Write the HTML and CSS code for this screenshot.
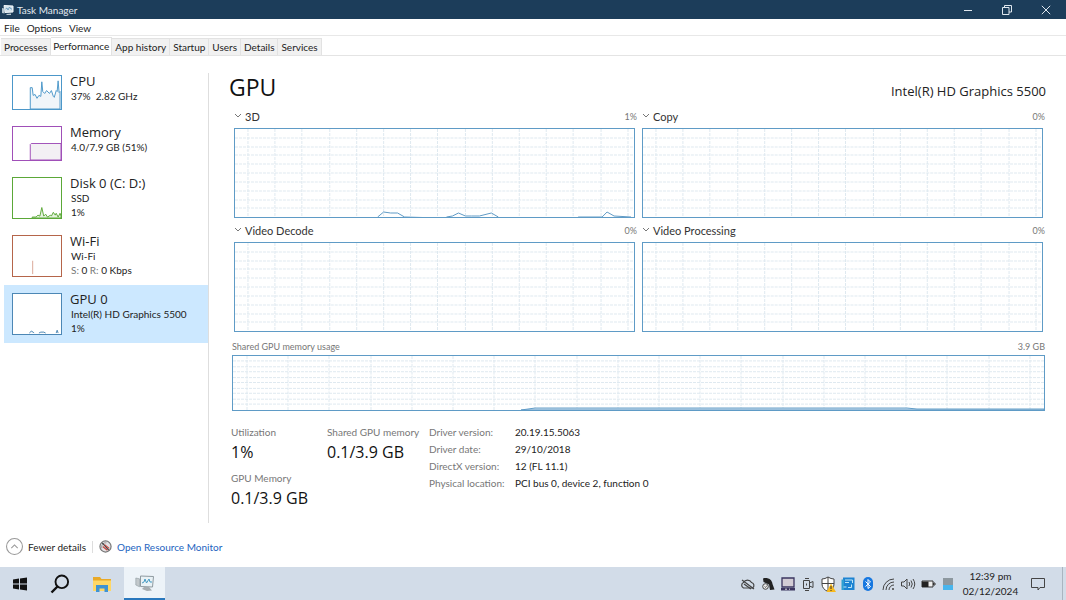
FILE: index.html
```html
<!DOCTYPE html>
<html lang="en">
<head>
<meta charset="utf-8">
<title>Task Manager</title>
<link rel="stylesheet" href="styles.css">
</head>
<body>
<svg class="defs" aria-hidden="true">
  <symbol id="grid" viewBox="0 0 400 88" preserveAspectRatio="none">
    <path d="M13 0V88M40 0V88M67 0V88M95 0V88M122 0V88M149 0V88M176 0V88M203 0V88M231 0V88M258 0V88M285 0V88M312 0V88M339 0V88M367 0V88M394 0V88M0 9H400M0 18H400M0 26H400M0 35H400M0 44H400M0 53H400M0 62H400M0 71H400M0 79H400"/>
  </symbol>
  <symbol id="chev" viewBox="0 0 8 6"><path d="M1 1l3 3 3-3" fill="none" stroke="#777"/></symbol>
</svg>

<header class="titlebar">
  <svg class="app-icon" viewBox="0 0 12 12" aria-hidden="true"><path d="M2 1.500l9 .5v6l-8 .5z" fill="#d5e3ec" stroke="#f2f7fa"/><path d="M3.500 5l1.500-1 1 2 1.500-3L9 5h1" fill="none" stroke="#5b8fb5" stroke-width=".8"/><path d="M0 4l2.500.5v5L0 9zM4 10l5-.5v1.500H5z" fill="#b5c5d0"/></svg>
  <span class="title">Task Manager</span>
  <button class="win-btn" aria-label="Minimize"><svg viewBox="0 0 10 10"><path d="M1 5.500h8"/></svg></button>
  <button class="win-btn" aria-label="Restore"><svg viewBox="0 0 10 10"><path d="M.5 2.500h6.500v7H.5zM2.500 2.500V.5h7V7H7"/></svg></button>
  <button class="win-btn" aria-label="Close"><svg viewBox="0 0 10 10"><path d="M.8.8l8.400 8.400M9.200.8L.8 9.200"/></svg></button>
</header>

<nav class="menubar" aria-label="Menu">
  <button>File</button><button>Options</button><button>View</button>
</nav>

<div class="tabs" role="tablist">
  <button role="tab">Processes</button><button role="tab" class="active" aria-selected="true">Performance</button><button role="tab">App history</button><button role="tab">Startup</button><button role="tab">Users</button><button role="tab">Details</button><button role="tab">Services</button>
</div>

<div class="content">
  <nav class="sidebar" aria-label="Resources">
    <button class="item">
      <svg class="thumb cpu" viewBox="0 0 50 34" preserveAspectRatio="none"><path d="M18 34V12l2 0 1 8 2-1 2 4 2-3 2 1 1-15 1 10 2 2 2-3 3 3 2-3 2 6 1 1 2-7 1 1 1-11 1 12 1-1V34z"/></svg>
      <span class="info"><span class="name">CPU</span><span class="sub">37%&nbsp; 2.82 GHz</span></span>
    </button>
    <button class="item">
      <svg class="thumb mem" viewBox="0 0 50 34" preserveAspectRatio="none"><path d="M18 34V18l1-1H50V34z"/></svg>
      <span class="info"><span class="name">Memory</span><span class="sub">4.0/7.9 GB (51%)</span></span>
    </button>
    <button class="item tall">
      <svg class="thumb disk" viewBox="0 0 50 42" preserveAspectRatio="none"><path d="M20 41l4 0 2-2 2 1 2-9 2 9 2-2 2 3 3-2 1 1 2-4 2 3 1-2 2 4 2-4 1 3V42H20z"/></svg>
      <span class="info"><span class="name">Disk 0 (C: D:)</span><span class="sub">SSD</span><span class="sub">1%</span></span>
    </button>
    <button class="item tall">
      <svg class="thumb wifi" viewBox="0 0 50 42" preserveAspectRatio="none"><path d="M20.500 40V26"/></svg>
      <span class="info"><span class="name">Wi-Fi</span><span class="sub">Wi-Fi</span><span class="sub"><i>S:</i> 0 <i>R:</i> 0 Kbps</span></span>
    </button>
    <button class="item tall selected" aria-current="true">
      <svg class="thumb gpu" viewBox="0 0 50 42" preserveAspectRatio="none"><path d="M17 41l2-2 2 1 1 1M27 41l2-1h3l2 1M45 41l1-3 1 3"/></svg>
      <span class="info"><span class="name">GPU 0</span><span class="sub">Intel(R) HD Graphics 5500</span><span class="sub">1%</span></span>
    </button>
  </nav>

  <main class="panel">
    <div class="heading"><h1>GPU</h1><span class="device">Intel(R) HD Graphics 5500</span></div>
    <div class="engines">
      <section><div class="label"><button><svg><use href="#chev"/></svg>3D</button><span>1%</span></div>
        <svg class="chart" viewBox="0 0 400 88" preserveAspectRatio="none"><use class="grid" href="#grid" width="400" height="88"/><path class="line" d="M143 88l6-5 7 1h7l7 4 18 .5M212 88l6-1 6-3 7 3h6l8 0 12-3 7 4M344 88h24l5-5 7 4 17 1"/></svg></section>
      <section><div class="label"><button><svg><use href="#chev"/></svg>Copy</button><span>0%</span></div>
        <svg class="chart" viewBox="0 0 400 88" preserveAspectRatio="none"><use class="grid" href="#grid" width="400" height="88"/></svg></section>
      <section><div class="label"><button><svg><use href="#chev"/></svg>Video Decode</button><span>0%</span></div>
        <svg class="chart" viewBox="0 0 400 88" preserveAspectRatio="none"><use class="grid" href="#grid" width="400" height="88"/></svg></section>
      <section><div class="label"><button><svg><use href="#chev"/></svg>Video Processing</button><span>0%</span></div>
        <svg class="chart" viewBox="0 0 400 88" preserveAspectRatio="none"><use class="grid" href="#grid" width="400" height="88"/></svg></section>
    </div>
    <section class="memory">
      <div class="mem-label"><span>Shared GPU memory usage</span><span>3.9 GB</span></div>
      <svg class="chart mem-chart" viewBox="0 0 811 55" preserveAspectRatio="none"><path class="grid" d="M14 0V55M55 0V55M96 0V55M138 0V55M179 0V55M220 0V55M261 0V55M302 0V55M344 0V55M385 0V55M426 0V55M467 0V55M508 0V55M550 0V55M591 0V55M632 0V55M673 0V55M714 0V55M756 0V55M797 0V55M0 5H811M0 11H811M0 16H811M0 22H811M0 27H811M0 33H811M0 38H811M0 44H811M0 49H811"/><path class="line fill" d="M288 55l14-2H674l10 1H811V55z"/></svg>
    </section>
    <div class="stats">
      <dl class="big"><dt>Utilization</dt><dd>1%</dd><dt>GPU Memory</dt><dd>0.1/3.9 GB</dd></dl>
      <dl class="big"><dt>Shared GPU memory</dt><dd>0.1/3.9 GB</dd></dl>
      <table class="driver">
        <tr><th scope="row">Driver version:</th><td>20.19.15.5063</td></tr>
        <tr><th scope="row">Driver date:</th><td>29/10/2018</td></tr>
        <tr><th scope="row">DirectX version:</th><td>12 (FL 11.1)</td></tr>
        <tr><th scope="row">Physical location:</th><td>PCI bus 0, device 2, function 0</td></tr>
      </table>
    </div>
  </main>
</div>

<footer class="footer">
  <button class="fewer"><svg viewBox="0 0 16 16"><circle cx="8" cy="8" r="7.500"/><path d="M5 9.500l3-3 3 3"/></svg>Fewer details</button>
  <span class="sep"></span>
  <a href="#" class="monitor"><svg viewBox="0 0 14 14"><circle cx="7" cy="7" r="6" fill="#e4e2e4" stroke="#777" stroke-width="1.300"/><path d="M3 9a4.500 4.500 0 0 1 5-6" fill="none" stroke="#9a9a9a"/><path d="M3.500 3l7 8" stroke="#444" stroke-width="1.300"/><path d="M6 5l5 4M4 7l5 4" stroke="#c8443c" stroke-width="1.200"/></svg>Open Resource Monitor</a>
</footer>

<div class="taskbar">
  <button class="task" aria-label="Start"><svg viewBox="0 0 20 20"><path d="M3 5.500l6-.9v5H3zM10 4.500L17 3.500v6.100h-7zM3 10.500h6v5l-6-.9zM10 10.500h7v6.100l-7-1z" fill="#111"/></svg></button>
  <button class="task" aria-label="Search"><svg viewBox="0 0 20 20"><circle cx="11.800" cy="7.800" r="6.300" fill="none" stroke="#111" stroke-width="1.900"/><path d="M7.500 12.500l-6 6" stroke="#111" stroke-width="2.400"/></svg></button>
  <button class="task wide" aria-label="File Explorer"><svg viewBox="0 0 20 20"><path d="M1 3h7l1.500 2H19v12H1z" fill="#e9a927"/><path d="M1 6.500h18V17H1z" fill="#ffd766"/><path d="M4 11h12v7h-3.500v-3.500h-5V18H4z" fill="#3f93d3"/></svg></button>
  <button class="task active" aria-label="Task Manager"><svg viewBox="0 0 20 20"><path d="M5.500 3l13 .5-1 10.500-12-.5z" fill="#e9f2f6" stroke="#8f9aa0"/><path d="M7 10l2-1 1-3 1.500 4L14 6l1 3h2" fill="none" stroke="#489cc4"/><path d="M.8 5l3.700.8v8L.8 12z" fill="#c2c8cb" stroke="#8f9aa0" stroke-width=".6"/><path d="M9 14h5l3 3.500-5 .5-5-2z" fill="#a6adb1"/></svg></button>
  <div class="tray">
    <svg viewBox="0 0 16 16"><path d="M3.500 12a3 3 0 0 1 0-5.500 4.500 4.500 0 0 1 8 0 3 3 0 0 1 1 5.500z" fill="none" stroke="#444" stroke-width="1.200"/><path d="M2 4l12 9M4 8l7 5" stroke="#444" stroke-width="1.200"/></svg>
    <svg viewBox="0 0 16 16"><path d="M3 2.500C7 1 12 3 12.500 8l2 5.500-4.500.5-1-5.500L3.500 6z" fill="#222"/><circle cx="5.500" cy="10.500" r="2.800" fill="#eee" stroke="#444"/><path d="M4.500 10.500l1 1 1.500-2" fill="none" stroke="#444" stroke-width=".8"/></svg>
    <svg viewBox="0 0 16 16"><path d="M2 2h12v9H2z" fill="#d2ccd5" stroke="#3b345f" stroke-width="1.300"/><path d="M1 12h14v2.500H1z" fill="#3b345f"/><path d="M5 13.200h2M9 13.200h1" stroke="#ddd"/></svg>
    <svg viewBox="0 0 16 16" fill="none" stroke="#444"><path d="M3.500 4.500h6v8h-6zM5 2.500h4M5 14.500h4M9.500 7l3.500-1.500v6L9.500 10"/><path d="M6.500 7.500v2"/></svg>
    <svg viewBox="0 0 16 16"><path d="M8 1q3 2 6 2v5q0 5-6 7.500Q2 13 2 8V3q3 0 6-2z" fill="#fff" stroke="#444"/><path d="M8 1v14M2 7.500h12" stroke="#444"/><path d="M11 7.500l5 8.500H6.500z" fill="#f8b91c"/><path d="M11 10v3M11 14v1" stroke="#333"/></svg>
    <svg viewBox="0 0 16 16"><path d="M3 1.500h11.500V14H3z" fill="#1c83d2"/><path d="M1.500 3.500H4V14H1.500z" fill="#2e9fd3"/><path d="M5 4h7.500v3M5 6.500h4M11.500 8.500v3H8M3.500 11h3" fill="none" stroke="#bde5f7"/></svg>
    <svg viewBox="0 0 16 16"><rect x="3" y="1" width="10" height="14" rx="5" fill="#1677e0"/><path d="M5.500 5.500l5 5L8 12.500v-9L10.500 6l-5 4.500" fill="none" stroke="#fff"/></svg>
    <svg viewBox="0 0 16 16" fill="none" stroke="#444"><path d="M3 14A11 11 0 0 1 14 3M6 14a8 8 0 0 1 8-8M9 14a5 5 0 0 1 5-5"/><circle cx="13" cy="13" r="1" fill="#444" stroke="none"/></svg>
    <svg viewBox="0 0 16 16" fill="none" stroke="#444"><path d="M1.500 6h2.500l3-3v10l-3-3H1.500zM9 6q1.500 2 0 4M11 4.500q2.500 3.500 0 7M13 3q3.500 5 0 10"/></svg>
    <svg viewBox="0 0 16 16"><path d="M2 5h11v6H2zM13.500 7H15v2h-1.500z" fill="#eee" stroke="#333"/><path d="M2 5.500h6.500V11H2z" fill="#222"/></svg>
    <svg viewBox="0 0 16 16"><path d="M3 2h10v7H3z" fill="#8d989f"/><path d="M3 9h10v5H3z" fill="#48b5ed"/></svg>
  </div>
  <div class="clock"><span>12:39 pm</span><span>02/12/2024</span></div>
  <button class="notify" aria-label="Notifications"><svg viewBox="0 0 16 16"><path d="M1.500 2.500h13v9H10L8 14V11.500H1.500z" fill="none" stroke="#444"/></svg></button>
  <span class="desk"></span>
</div>
</body>
</html>
```

FILE: styles.css
```css
* { box-sizing: border-box; }
body {
  margin: 0;
  min-height: 100vh;
  display: flex;
  flex-direction: column;
  background: #fff;
  color: #222;
  font: 10px/14px Lato, "Noto Sans", sans-serif;
}
button {
  font: inherit;
  color: inherit;
  background: none;
  border: 0;
  padding: 0;
  text-align: left;
}
svg { display: block; flex: none; }
.defs { position: absolute; width: 0; height: 0; }

.titlebar { display: flex; align-items: center; height: 19px; padding-right: 1px; background: #1c3d5a; color: #e3eaf0; }
.app-icon { width: 12px; height: 12px; margin: 0 3px 0 2px; }
.title { flex: 1; }
.win-btn { width: 39px; display: flex; justify-content: center; }
.win-btn svg { width: 10px; height: 10px; fill: none; stroke: #dfe7ee; }

.menubar { display: flex; gap: 7px; height: 17px; padding: 1px 4px 0; border-bottom: 1px solid #e8e8e8; }
.tabs { display: flex; align-items: flex-end; height: 20px; padding-left: 1px; border-bottom: 1px solid #e4e4e4; }
.tabs button { height: 17px; padding: 0 3px; background: #f1f1f1; border: 1px solid #e2e2e2; border-width: 1px 1px 0 0; white-space: nowrap; }
.tabs .active { height: 18px; padding: 0 2px 2px; background: #fff; }

.content { flex: 1; display: flex; padding: 17px 20px 0 4px; }
.sidebar { width: 205px; flex: none; border-right: 1px solid #dedede; }
.item { display: flex; gap: 8px; width: 100%; padding: 8px; }
.item:first-child { padding-top: 2px; }
.item.selected { background: #cce8ff; }
.thumb { width: 50px; height: 35px; background: #fff; border: 1px solid; }
.tall .thumb { height: 42px; }
.thumb path { stroke: currentColor; fill: #f0f5f9; stroke-width: 1; }
.cpu { color: #4c97c9; }
.mem { color: #a04fb8; }
.mem path { fill: #f3f0f4; }
.disk { color: #5ba838; }
.disk path { fill: #e6f3e0; }
.wifi { color: #b5654a; }
.wifi path { stroke: #d9a595; }
.gpu { color: #4c87b5; }
.info { display: flex; flex-direction: column; white-space: nowrap; }
.name, .device, h1, dd { font-family: "Open Sans", "Noto Sans", sans-serif; }
.name { font-size: 13px; line-height: 12px; margin-bottom: 2px; }
.sub { line-height: 14px; padding-left: 1px; }
.sub i { font-style: normal; color: #777; }

.panel { flex: 1; min-width: 0; padding-left: 20px; }
.heading { display: flex; justify-content: space-between; align-items: baseline; height: 37px; }
h1 { margin: 0; font-size: 23px; line-height: 28px; font-weight: 400; color: #111; }
.device { font-size: 13px; }
.engines { display: grid; grid-template-columns: 1fr 1fr; column-gap: 7px; padding: 0 3px 0 5px; }
.label { display: flex; justify-content: space-between; height: 18px; line-height: 14px; margin-right: -2px; color: #777; font-size: 9px; }
.label button { display: flex; font-size: 11px; color: #333; }
.label svg { width: 8px; height: 6px; margin: 3px 3px 0 0; }
.engines section { height: 114px; }
.chart { width: 100%; height: 90px; border: 1px solid #5f9bc6; }
.grid { fill: none; stroke: #dfe9f0; stroke-dasharray: 3 1; }
.line { fill: none; stroke: #5f9bc6; }
.line.fill { fill: #d5e6f3; }
.memory { padding: 2px 1px 0 3px; }
.mem-label { display: flex; justify-content: space-between; height: 15px; color: #777; font-size: 9px; }
.mem-chart { height: 56px; }
.stats { display: flex; padding: 13px 0 0 2px; }
.big { margin: 0; width: 96px; flex: none; white-space: nowrap; }
.big + .big { width: 102px; }
dt { color: #777; line-height: 16px; }
dd { margin: 0 0 5px; font-size: 16px; line-height: 25px; color: #111; }
.driver { border-collapse: collapse; align-self: flex-start; white-space: nowrap; }
th, td { padding: 0; line-height: 17px; text-align: left; font-weight: 400; }
th { width: 86px; color: #777; }

.footer { display: flex; align-items: center; height: 44px; padding: 3px 0 0 6px; }
.fewer, .monitor { display: flex; align-items: center; gap: 5px; }
.fewer svg { width: 17px; height: 17px; fill: none; stroke: #999; }
.sep { height: 12px; margin: 0 6px; border-left: 1px solid #ddd; }
.monitor { color: #1d64c0; text-decoration: none; }
.monitor svg { width: 13px; height: 13px; }

.taskbar { display: flex; align-items: center; height: 33px; background: #d2dce8; }
.task { width: 40px; height: 33px; display: flex; align-items: center; justify-content: center; }
.task.wide { width: 44px; }
.task svg { width: 20px; height: 20px; }
.task.active { width: 41px; background: #edf3f8; border-bottom: 2px solid #2a78bd; }
.tray { flex: 1; display: flex; justify-content: flex-end; gap: 4px; }
.tray svg { width: 16px; height: 16px; }
.clock { display: flex; flex-direction: column; align-items: center; width: 69px; line-height: 15px; }
.notify { margin: 0 16px 0 5px; }
.notify svg { width: 16px; height: 16px; }
.desk { align-self: stretch; width: 4px; border-left: 1px solid #aab5c0; }
```
